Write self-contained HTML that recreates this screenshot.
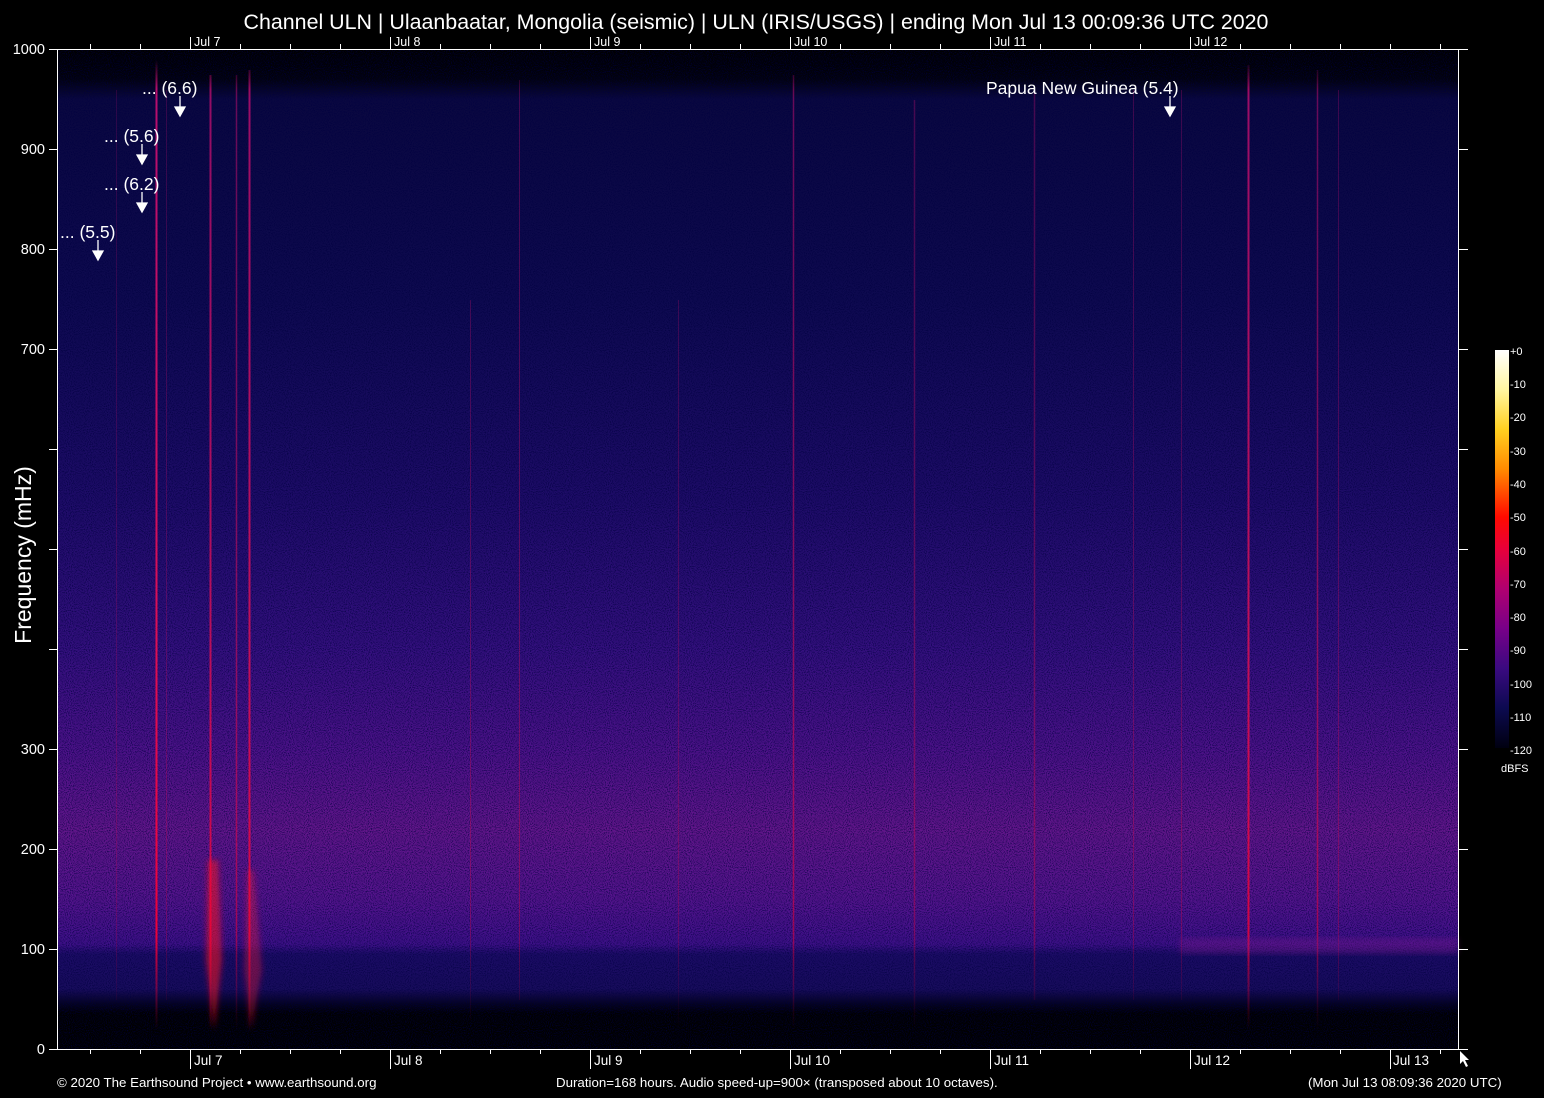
<!DOCTYPE html>
<html><head><meta charset="utf-8"><style>
html,body{margin:0;padding:0;background:#000;}
svg{display:block;font-family:"Liberation Sans",Arial,sans-serif;}
</style></head><body>
<svg width="1544" height="1098" viewBox="0 0 1544 1098" xmlns="http://www.w3.org/2000/svg">
<defs>
<linearGradient id="bg" x1="0" y1="49" x2="0" y2="1049" gradientUnits="userSpaceOnUse">
<stop offset="0" stop-color="#000"/>
<stop offset="0.03" stop-color="#02020c"/>
<stop offset="0.05" stop-color="#0a0840"/>
<stop offset="0.25" stop-color="#0e0a50"/>
<stop offset="0.45" stop-color="#1e0c68"/>
<stop offset="0.6" stop-color="#34107e"/>
<stop offset="0.7" stop-color="#4c1288"/>
<stop offset="0.78" stop-color="#62168a"/>
<stop offset="0.85" stop-color="#54148c"/>
<stop offset="0.895" stop-color="#3e1088"/>
<stop offset="0.905" stop-color="#1c0c66"/>
<stop offset="0.94" stop-color="#180c5c"/>
<stop offset="0.955" stop-color="#050320"/>
<stop offset="0.965" stop-color="#000"/>
<stop offset="1" stop-color="#000"/>
</linearGradient>
<linearGradient id="cb" x1="0" y1="350" x2="0" y2="748" gradientUnits="userSpaceOnUse">
<stop offset="0" stop-color="#ffffff"/>
<stop offset="0.1" stop-color="#fff6a0"/>
<stop offset="0.2" stop-color="#ffd020"/>
<stop offset="0.3" stop-color="#ff8a00"/>
<stop offset="0.42" stop-color="#ff0a00"/>
<stop offset="0.5" stop-color="#e8003a"/>
<stop offset="0.6" stop-color="#b00070"/>
<stop offset="0.7" stop-color="#780088"/>
<stop offset="0.8" stop-color="#3a0a80"/>
<stop offset="0.9" stop-color="#0c0a50"/>
<stop offset="1" stop-color="#000010"/>
</linearGradient>
<linearGradient id="ln" x1="0" y1="60" x2="0" y2="1030" gradientUnits="userSpaceOnUse">
<stop offset="0" stop-color="#e0107a" stop-opacity="0"/>
<stop offset="0.03" stop-color="#e0107a" stop-opacity="0.8"/>
<stop offset="0.6" stop-color="#f01050" stop-opacity="0.9"/>
<stop offset="0.9" stop-color="#ff0030" stop-opacity="0.9"/>
<stop offset="1" stop-color="#ff0030" stop-opacity="0"/>
</linearGradient>
<filter id="nz" x="0" y="0" width="100%" height="100%">
<feTurbulence type="fractalNoise" baseFrequency="0.95" numOctaves="1" seed="3"/>
<feColorMatrix values="0 0 0 0 0  0 0 0 0 0  0 0 0 0 0.05  0 0 0 -3 1.7"/>
</filter>
<filter id="bl"><feGaussianBlur stdDeviation="3"/></filter>
</defs>
<text x="756" y="29" fill="#fff" font-size="21.4" text-anchor="middle">Channel ULN | Ulaanbaatar, Mongolia (seismic) | ULN (IRIS/USGS) | ending Mon Jul 13 00:09:36 UTC 2020</text>
<rect x="57" y="49" width="1401" height="1000" fill="url(#bg)"/>
<rect x="57" y="49" width="1401" height="1000" filter="url(#nz)" opacity="0.75"/>
<g filter="url(#bl)">
<path d="M208 860 L218 860 L222 960 L214 1030 L206 960 Z" fill="#ff1020" opacity="0.55"/>
<path d="M247 870 L254 870 L262 970 L251 1030 L244 970 Z" fill="#ff1030" opacity="0.35"/>
</g>
<g stroke="url(#ln)" fill="none">
<line x1="156.5" y1="60" x2="156.5" y2="1030" stroke-width="2"/>
<line x1="210.5" y1="75" x2="210.5" y2="1035" stroke-width="2" opacity="0.8"/>
<line x1="236.5" y1="75" x2="236.5" y2="1030" stroke-width="1.5" opacity="0.55"/>
<line x1="249.5" y1="70" x2="249.5" y2="1035" stroke-width="2" opacity="0.85"/>
<line x1="793.5" y1="75" x2="793.5" y2="1030" stroke-width="1.5" opacity="0.55"/>
<line x1="914.5" y1="100" x2="914.5" y2="1030" stroke-width="1.5" opacity="0.35"/>
<line x1="1034.5" y1="90" x2="1034.5" y2="1000" stroke-width="1.5" opacity="0.35"/>
<line x1="1133.5" y1="90" x2="1133.5" y2="1000" stroke-width="1" opacity="0.3"/>
<line x1="1181.5" y1="90" x2="1181.5" y2="1000" stroke-width="1" opacity="0.3"/>
<line x1="1248.5" y1="65" x2="1248.5" y2="1030" stroke-width="2" opacity="0.85"/>
<line x1="1317.5" y1="70" x2="1317.5" y2="1035" stroke-width="1.5" opacity="0.55"/>
<line x1="1338.5" y1="90" x2="1338.5" y2="1000" stroke-width="1" opacity="0.3"/>
<line x1="519.5" y1="80" x2="519.5" y2="1000" stroke-width="1" opacity="0.35"/>
<line x1="470.5" y1="300" x2="470.5" y2="1020" stroke-width="1" opacity="0.3"/>
<line x1="166.5" y1="90" x2="166.5" y2="1000" stroke-width="1" opacity="0.25"/>
<line x1="116.5" y1="90" x2="116.5" y2="1000" stroke-width="1" opacity="0.2"/>
<line x1="678.5" y1="300" x2="678.5" y2="1030" stroke-width="1" opacity="0.25"/>
</g>
<rect x="1180" y="938" width="278" height="16" fill="#8a1a90" opacity="0.3" filter="url(#bl)"/>
<g stroke="#fff" stroke-width="1" fill="none" shape-rendering="crispEdges">
<line x1="57" y1="49.5" x2="1468" y2="49.5"/>
<line x1="57" y1="1049.5" x2="1468" y2="1049.5"/>
<line x1="57.5" y1="49" x2="57.5" y2="1049"/>
<line x1="1458.5" y1="49" x2="1458.5" y2="1049"/>
</g>
<g stroke="#fff" stroke-width="1" shape-rendering="crispEdges">
<path d="M90.5 49v-5M140.5 49v-5M240.5 49v-5M290.5 49v-5M340.5 49v-5M440.5 49v-5M490.5 49v-5M540.5 49v-5M640.5 49v-5M690.5 49v-5M740.5 49v-5M840.5 49v-5M890.5 49v-5M940.5 49v-5M1040.5 49v-5M1090.5 49v-5M1140.5 49v-5M1240.5 49v-5M1290.5 49v-5M1340.5 49v-5M1390.5 49v-5M1440.5 49v-5"/>
<path d="M190.5 49v-12M390.5 49v-12M590.5 49v-12M790.5 49v-12M990.5 49v-12M1190.5 49v-12"/>
<path d="M90.5 1049v5M140.5 1049v5M240.5 1049v5M290.5 1049v5M340.5 1049v5M440.5 1049v5M490.5 1049v5M540.5 1049v5M640.5 1049v5M690.5 1049v5M740.5 1049v5M840.5 1049v5M890.5 1049v5M940.5 1049v5M1040.5 1049v5M1090.5 1049v5M1140.5 1049v5M1240.5 1049v5M1290.5 1049v5M1340.5 1049v5M1440.5 1049v5"/>
<path d="M190.5 1049v20M390.5 1049v20M590.5 1049v20M790.5 1049v20M990.5 1049v20M1190.5 1049v20M1390.5 1049v20"/>
<path d="M57 49.5h-8M57 149.5h-8M57 249.5h-8M57 349.5h-8M57 449.5h-8M57 549.5h-8M57 649.5h-8M57 749.5h-8M57 849.5h-8M57 949.5h-8M57 1049.5h-8"/>
<path d="M1458 149.5h10M1458 249.5h10M1458 349.5h10M1458 449.5h10M1458 549.5h10M1458 649.5h10M1458 749.5h10M1458 849.5h10M1458 949.5h10"/>
</g>
<g fill="#fff" font-size="12.5">
<text x="194" y="46">Jul  7</text><text x="394" y="46">Jul  8</text><text x="594" y="46">Jul  9</text><text x="794" y="46">Jul 10</text><text x="994" y="46">Jul 11</text><text x="1194" y="46">Jul 12</text>
</g>
<g fill="#fff" font-size="13.5">
<text x="194" y="1065">Jul  7</text><text x="394" y="1065">Jul  8</text><text x="594" y="1065">Jul  9</text><text x="794" y="1065">Jul 10</text><text x="994" y="1065">Jul 11</text><text x="1194" y="1065">Jul 12</text><text x="1393" y="1065">Jul 13</text>
</g>
<g fill="#fff" font-size="14.5" text-anchor="end">
<text x="45" y="54">1000</text><text x="45" y="154">900</text><text x="45" y="254">800</text><text x="45" y="354">700</text>
<text x="45" y="754">300</text><text x="45" y="854">200</text><text x="45" y="954">100</text><text x="45" y="1054">0</text>
</g>
<text transform="translate(31,555) rotate(-90)" fill="#fff" font-size="23" text-anchor="middle">Frequency (mHz)</text>
<g fill="#fff" font-size="17.5">
<text x="142" y="94">... (6.6)</text>
<text x="104" y="142">... (5.6)</text>
<text x="104" y="190">... (6.2)</text>
<text x="60" y="238">... (5.5)</text>
<text x="986" y="94">Papua New Guinea (5.4)</text>
</g>
<g stroke="#fff" stroke-width="1.3" fill="#fff">
<line x1="180" y1="96" x2="180" y2="108"/><path d="M175 107h10l-5 9z"/>
<line x1="142" y1="144" x2="142" y2="156"/><path d="M137 155h10l-5 9z"/>
<line x1="142" y1="192" x2="142" y2="204"/><path d="M137 203h10l-5 9z"/>
<line x1="98" y1="240" x2="98" y2="252"/><path d="M93 251h10l-5 9z"/>
<line x1="1170" y1="96" x2="1170" y2="108"/><path d="M1165 107h10l-5 9z"/>
</g>
<path d="M1460 1051l0 13 3-3 3 6 2-1-3-6 4 0z" fill="#fff"/>
<rect x="1495" y="350" width="14" height="398" fill="url(#cb)"/>
<g fill="#fff" font-size="11">
<text x="1510" y="355">+0</text><text x="1510" y="388">-10</text><text x="1510" y="421">-20</text><text x="1510" y="455">-30</text><text x="1510" y="488">-40</text><text x="1510" y="521">-50</text><text x="1510" y="555">-60</text><text x="1510" y="588">-70</text><text x="1510" y="621">-80</text><text x="1510" y="654">-90</text><text x="1510" y="688">-100</text><text x="1510" y="721">-110</text><text x="1510" y="754">-120</text>
<text x="1501" y="772">dBFS</text>
</g>
<g fill="#fff" font-size="13.3">
<text x="57" y="1087">© 2020 The Earthsound Project • www.earthsound.org</text>
<text x="556" y="1087">Duration=168 hours. Audio speed-up=900× (transposed about 10 octaves).</text>
<text x="1308" y="1087">(Mon Jul 13 08:09:36 2020 UTC)</text>
</g>
</svg>
</body></html>
